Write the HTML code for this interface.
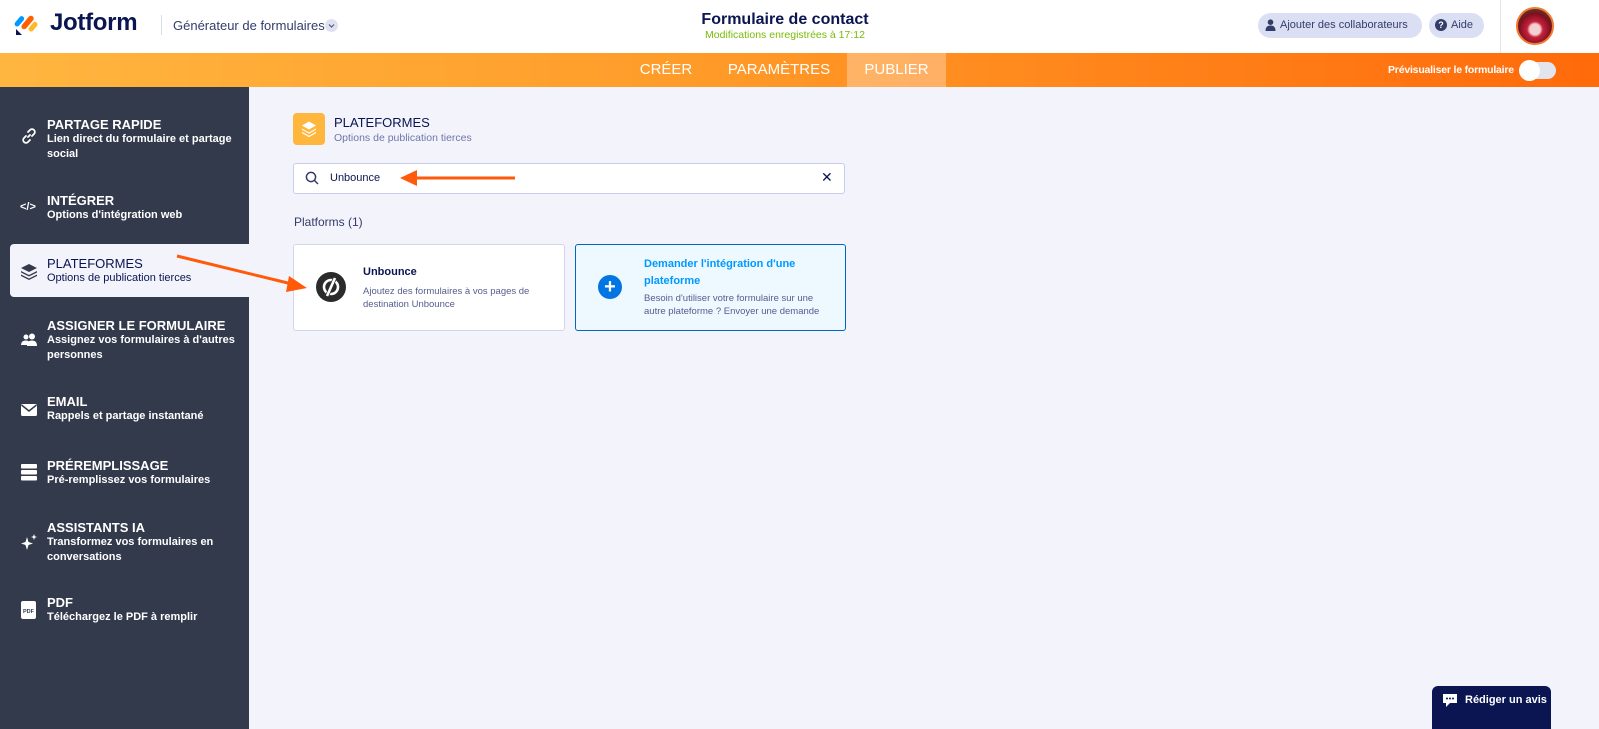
<!DOCTYPE html>
<html><head><meta charset="utf-8"><style>
*{box-sizing:border-box;margin:0;padding:0}
body{width:1599px;height:729px;overflow:hidden;background:#f3f3fc;font-family:"Liberation Sans",sans-serif;position:relative;color:#0a1551}
.abs{position:absolute}
.hdr{left:0;top:0;width:1599px;height:53px;background:#fff}
.bar{left:0;top:53px;width:1599px;height:34px;background:linear-gradient(90deg,#ffb640 0%,#ff9a28 45%,#ff6a0a 100%)}
.side{left:0;top:87px;width:249px;height:642px;background:#333a4c}
.it{position:absolute;left:47px;color:#fff;font-size:11px;font-weight:bold;line-height:14.5px}
.it b{display:block;font-size:13px;line-height:15px}
.ic{position:absolute;left:20px;width:18px;height:18px}
.tab{position:absolute;top:53px;height:34px;line-height:34px;color:#fff;font-size:15px;text-align:center}
</style></head><body>
<div class="abs hdr"></div>
<svg class="abs" style="left:14px;top:12px" width="26" height="24" viewBox="0 0 26 24">
<rect x="3" y="3" width="5" height="12" rx="2.5" transform="rotate(40 5 9)" fill="#0099ff"/>
<rect x="11" y="2" width="5.5" height="16" rx="2.7" transform="rotate(40 13 10)" fill="#ff6100"/>
<rect x="17" y="9" width="5" height="11" rx="2.5" transform="rotate(40 19 14)" fill="#ffb629"/>
<path d="M2 17 L8 23 L2 23Z" fill="#0a1551"/>
</svg>
<div class="abs" style="left:50px;top:9px;font-size:24px;font-weight:bold;color:#0a1551;letter-spacing:-0.3px">Jotform</div>
<div class="abs" style="left:161px;top:15px;width:1px;height:20px;background:#d8dbe8"></div>
<div class="abs" style="left:173px;top:18px;font-size:13px;color:#343c6a">Générateur de formulaires</div>
<div class="abs" style="left:325px;top:19px;width:13px;height:13px;border-radius:50%;background:#dfe1f1"></div>
<svg class="abs" style="left:325px;top:19px" width="13" height="13" viewBox="0 0 13 13" fill="none" stroke="#555a80" stroke-width="1.2"><path d="M4 5.5 L6.5 8 L9 5.5"/></svg>
<div class="abs" style="left:600px;top:11px;width:370px;text-align:center;font-size:16px;font-weight:bold;color:#0a1551">Formulaire de contact</div>
<div class="abs" style="left:600px;top:29px;width:370px;text-align:center;font-size:10.5px;color:#78bb07">Modifications enregistrées à 17:12</div>
<div class="abs" style="left:1258px;top:13px;width:164px;height:25px;border-radius:13px;background:#dadff3;font-size:11px;color:#343c6a;line-height:25px;padding-left:22px">Ajouter des collaborateurs</div>
<svg class="abs" style="left:1265px;top:19px" width="11" height="12" viewBox="0 0 11 12"><circle cx="5.5" cy="3.2" r="2.8" fill="#343c6a"/><path d="M0.5 12 Q0.5 6.5 5.5 6.5 Q10.5 6.5 10.5 12Z" fill="#343c6a"/></svg>
<div class="abs" style="left:1429px;top:13px;width:55px;height:25px;border-radius:13px;background:#dadff3;font-size:11px;color:#343c6a;line-height:25px;padding-left:22px">Aide</div>
<div class="abs" style="left:1435px;top:19px;width:12px;height:12px;border-radius:50%;background:#343c6a;color:#fff;font-size:9px;font-weight:bold;text-align:center;line-height:12px">?</div>
<div class="abs" style="left:1500px;top:0;width:1px;height:53px;background:#e4e6ef"></div>
<div class="abs" style="left:1516px;top:7px;width:38px;height:38px;border-radius:50%;background:radial-gradient(circle at 50% 60%,#f6d0d0 0 20%,#c8203a 30%,#7a1020 60%,#3d6a2a 100%);border:2px solid #f07a30"></div>

<div class="abs bar"></div>
<div class="tab" style="left:625px;width:82px">CRÉER</div>
<div class="tab" style="left:714px;width:130px">PARAMÈTRES</div>
<div class="tab" style="left:847px;width:99px;background:rgba(255,255,255,0.3)">PUBLIER</div>
<div class="abs" style="left:1388px;top:64px;width:126px;font-size:10.5px;font-weight:bold;color:#fff;white-space:nowrap;letter-spacing:-0.2px">Prévisualiser le formulaire</div>
<div class="abs" style="left:1520px;top:62px;width:36px;height:17px;border-radius:9px;background:#e2e4ee"></div>
<div class="abs" style="left:1519px;top:60px;width:21px;height:21px;border-radius:50%;background:#fff"></div>

<div class="abs side"></div>
<div class="abs" style="left:10px;top:244px;width:240px;height:53px;background:#f3f3fc;border-radius:4px 0 0 4px"></div>

<svg class="ic" style="top:127px" viewBox="0 0 18 18" fill="none" stroke="#fff" stroke-width="1.8" stroke-linecap="round"><path d="M8 10 L10 8"/><path d="M6 9 L4 11 a2.8 2.8 0 0 0 4 4 L10 13"/><path d="M12 9 L14 7 a2.8 2.8 0 0 0 -4 -4 L8 5"/></svg>
<div class="it" style="top:117px"><b>PARTAGE RAPIDE</b>Lien direct du formulaire et partage<br>social</div>
<div class="abs" style="left:20px;top:201px;color:#fff;font-size:11px;font-weight:bold">&lt;/&gt;</div>
<div class="it" style="top:193px"><b>INTÉGRER</b>Options d'intégration web</div>
<svg class="ic" style="top:262px" viewBox="0 0 18 18" fill="#343a4b"><path d="M9 2 L17 6 L9 10 L1 6Z"/><path d="M1 9 L9 13 L17 9 L17 10.5 L9 14.5 L1 10.5Z"/><path d="M1 12.5 L9 16.5 L17 12.5 L17 14 L9 18 L1 14Z"/></svg>
<div class="it" style="top:256px;color:#0a1551;font-weight:normal"><b style="font-weight:normal">PLATEFORMES</b>Options de publication tierces</div>
<svg class="ic" style="top:331px" viewBox="0 0 18 18" fill="#fff"><circle cx="6" cy="6" r="2.5"/><path d="M1 14 Q1 9.5 6 9.5 Q8 9.5 9 10.5 L9 14Z"/><circle cx="12" cy="5.5" r="3"/><path d="M7 15 Q7 9.5 12 9.5 Q17 9.5 17 15Z"/></svg>
<div class="it" style="top:318px"><b>ASSIGNER LE FORMULAIRE</b>Assignez vos formulaires à d'autres<br>personnes</div>
<svg class="ic" style="top:401px" viewBox="0 0 18 18"><rect x="1" y="3" width="16" height="12" rx="1.5" fill="#fff"/><path d="M1.5 4 L9 10 L16.5 4" stroke="#333a4c" stroke-width="1.5" fill="none"/></svg>
<div class="it" style="top:394px"><b>EMAIL</b>Rappels et partage instantané</div>
<svg class="ic" style="top:463px" viewBox="0 0 18 18" fill="#fff"><rect x="1" y="1" width="16" height="4.5" rx="1"/><rect x="1" y="7" width="16" height="4.5" rx="1"/><rect x="1" y="13" width="16" height="4.5" rx="1"/></svg>
<div class="it" style="top:458px"><b>PRÉREMPLISSAGE</b>Pré-remplissez vos formulaires</div>
<svg class="ic" style="top:533px" viewBox="0 0 18 18" fill="#fff"><path d="M7 4 L8.5 9 L13 10.5 L8.5 12 L7 17 L5.5 12 L1 10.5 L5.5 9Z"/><path d="M14 1 L14.8 3.2 L17 4 L14.8 4.8 L14 7 L13.2 4.8 L11 4 L13.2 3.2Z"/></svg>
<div class="it" style="top:520px"><b>ASSISTANTS IA</b>Transformez vos formulaires en<br>conversations</div>
<div class="abs" style="left:21px;top:601px;width:15px;height:18px;background:#fff;border-radius:2px;color:#333a4c;font-size:5.5px;font-weight:bold;padding-top:8px;text-align:center">PDF</div>
<div class="it" style="top:595px"><b>PDF</b>Téléchargez le PDF à remplir</div>

<div class="abs" style="left:293px;top:113px;width:32px;height:32px;border-radius:4px;background:#ffb63c"></div>
<svg class="abs" style="left:300px;top:119px" width="18" height="19" viewBox="0 0 18 18" fill="#fff"><path d="M9 2 L16 6 L9 10 L2 6Z"/><path d="M2 9 L9 13 L16 9 L16 10.3 L9 14.3 L2 10.3Z"/><path d="M2 12.3 L9 16.3 L16 12.3 L16 13.6 L9 17.6 L2 13.6Z"/></svg>
<div class="abs" style="left:334px;top:115px;font-size:13px;color:#0a1551">PLATEFORMES</div>
<div class="abs" style="left:334px;top:132px;font-size:10.5px;color:#6f76a7">Options de publication tierces</div>
<div class="abs" style="left:293px;top:163px;width:552px;height:31px;background:#fff;border:1px solid #c8cce8;border-radius:3px"></div>
<svg class="abs" style="left:305px;top:171px" width="14" height="14" viewBox="0 0 14 14" fill="none" stroke="#343c6a" stroke-width="1.5"><circle cx="6" cy="6" r="4.6"/><path d="M9.4 9.4 L13 13"/></svg>
<div class="abs" style="left:330px;top:172px;font-size:11px;color:#0a1551">Unbounce</div>
<div class="abs" style="left:821px;top:169px;font-size:14px;color:#0a1551">✕</div>
<div class="abs" style="left:294px;top:215px;font-size:12px;color:#343c6a">Platforms (1)</div>

<div class="abs" style="left:293px;top:244px;width:272px;height:87px;background:#fff;border:1px solid #d3d6ea;border-radius:3px"></div>
<div class="abs" style="left:316px;top:272px;width:30px;height:30px;border-radius:50%;background:#2b2b2b"></div>
<svg class="abs" style="left:316px;top:272px" width="30" height="30" viewBox="0 0 30 30" fill="none" stroke="#fff" stroke-width="2.6"><circle cx="15" cy="15" r="7"/><path d="M19 6 L11 24" stroke="#2b2b2b" stroke-width="4"/><path d="M19 6 L11 24"/></svg>
<div class="abs" style="left:363px;top:266px;font-size:11px;font-weight:bold;color:#0a1551">Unbounce</div>
<div class="abs" style="left:363px;top:286px;font-size:9.5px;line-height:12.5px;color:#565d8f">Ajoutez des formulaires à vos pages de<br>destination Unbounce</div>

<div class="abs" style="left:575px;top:244px;width:271px;height:87px;background:#edf8ff;border:1px solid #0066c3;border-radius:3px"></div>
<div class="abs" style="left:598px;top:275px;width:24px;height:24px;border-radius:50%;background:#0075e3;color:#fff;font-size:20px;font-weight:bold;text-align:center;line-height:24px">+</div>
<div class="abs" style="left:644px;top:256px;font-size:11px;font-weight:bold;line-height:16.5px;color:#0099ff">Demander l'intégration d'une<br>plateforme</div>
<div class="abs" style="left:644px;top:293px;font-size:9.5px;line-height:12.5px;color:#565d8f">Besoin d'utiliser votre formulaire sur une<br>autre plateforme ? Envoyer une demande</div>

<svg class="abs" style="left:0;top:0" width="1599" height="729">
<path d="M515 178 L415 178" stroke="#ff5a0a" stroke-width="3"/>
<path d="M400 178 L417 170 L417 186Z" fill="#ff5a0a"/>
<path d="M177 256 L292 284" stroke="#ff5a0a" stroke-width="3"/>
<path d="M307 288 L289 276 L286 292Z" fill="#ff5a0a"/>
</svg>

<div class="abs" style="left:1432px;top:686px;width:119px;height:43px;background:#0a1551;border-radius:6px 6px 0 0"></div>
<svg class="abs" style="left:1442px;top:693px" width="16" height="15" viewBox="0 0 16 15"><path d="M1 1 H15 V10 H8 L4 14 V10 H1Z" fill="#fff"/><circle cx="5" cy="5.5" r="1" fill="#0a1551"/><circle cx="8" cy="5.5" r="1" fill="#0a1551"/><circle cx="11" cy="5.5" r="1" fill="#0a1551"/></svg>
<div class="abs" style="left:1465px;top:694px;font-size:11px;font-weight:bold;color:#fff">Rédiger un avis</div>
</body></html>
